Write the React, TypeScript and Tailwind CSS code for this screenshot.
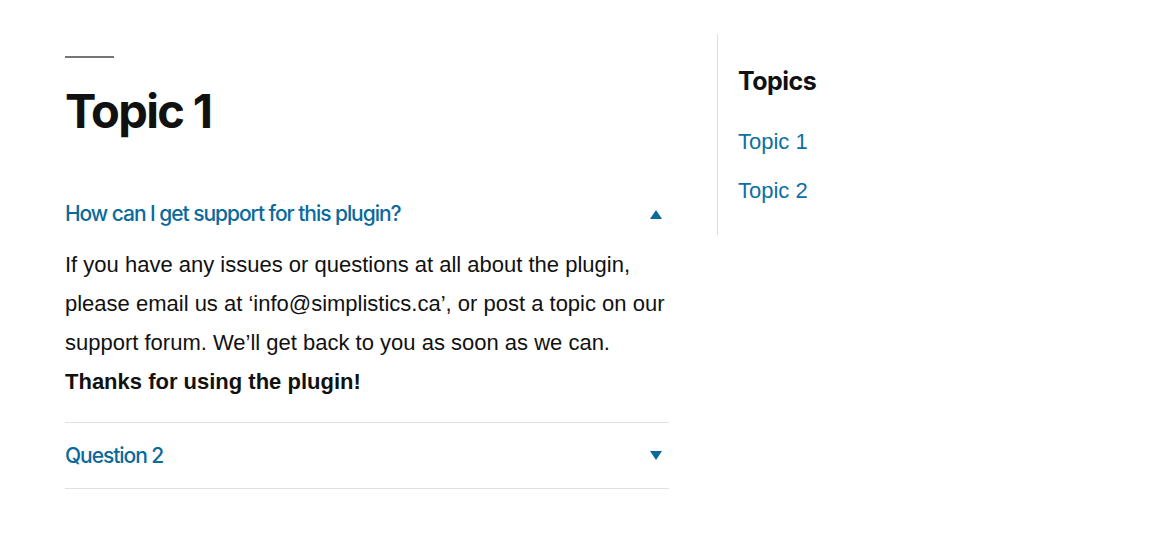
import React, { useState } from 'react';

interface Faq {
  question: string;
  answer?: React.ReactNode;
}

const faqs: Faq[] = [
  {
    question: 'How can I get support for this plugin?',
    answer: (
      <>
        <p>
          If you have any issues or questions at all about the plugin, please email us at
          ‘info@simplistics.ca’, or post a topic on our support forum. We’ll get back to you as
          soon as we can.
        </p>
        <p className="font-bold">Thanks for using the plugin!</p>
      </>
    ),
  },
  { question: 'Question 2' },
];

const topics = ['Topic 1', 'Topic 2'];

const Caret = ({ up }: { up: boolean }) => (
  <svg width="12" height="9" viewBox="0 0 12 9" className="shrink-0">
    {up ? <path d="M6 0 L12 9 L0 9 Z" fill="#0b6a9c" /> : <path d="M0 0 L12 0 L6 9 Z" fill="#0b6a9c" />}
  </svg>
);

const App = () => {
  const [open, setOpen] = useState<number | null>(0);

  return (
    <div className="flex min-h-screen bg-white pl-[65px] pt-[34px]">
      <main className="w-[604px] pt-[22px]">
        <div className="h-[2px] w-[49px] bg-[#767676]" />
        <h1 className="mt-[23px] font-['Inter',sans-serif] text-[47px] font-bold leading-[60px] tracking-[-0.035em] text-[#111]">
          Topic 1
        </h1>

        <div className="mt-[53px]">
          {faqs.map((faq, i) => {
            const isOpen = open === i;
            return (
              <div key={faq.question} className={i > 0 ? 'border-y border-[#e0e0e0]' : ''}>
                <button
                  onClick={() => setOpen(isOpen ? null : i)}
                  className={`flex w-full items-center justify-between pr-[7px] text-left font-['Inter',sans-serif] text-[21px] font-medium tracking-[-0.05em] text-[#0b6a9c] ${
                    i > 0 ? 'h-[65px]' : 'h-[40px]'
                  }`}
                >
                  <span>{faq.question}</span>
                  <Caret up={isOpen} />
                </button>
                {isOpen && faq.answer && (
                  <div className="pt-[11px] pb-[21px] font-['Liberation_Sans',Arial,sans-serif] text-[22px] leading-[39px] text-[#111]">
                    {faq.answer}
                  </div>
                )}
              </div>
            );
          })}
        </div>
      </main>

      <aside className="ml-[48px] h-[201px] border-l border-[#dddddd] pl-[20px] pt-[31px]">
        <h2 className="font-['Inter',sans-serif] text-[25px] font-bold leading-[32px] tracking-[-0.02em] text-[#111]">
          Topics
        </h2>
        <ul className="mt-[30px] space-y-[19px]">
          {topics.map((t) => (
            <li key={t}>
              <a href="#" className="font-['Liberation_Sans',Arial,sans-serif] text-[22px] leading-[30px] text-[#0e6fa0]">
                {t}
              </a>
            </li>
          ))}
        </ul>
      </aside>
    </div>
  );
};

export default App;
